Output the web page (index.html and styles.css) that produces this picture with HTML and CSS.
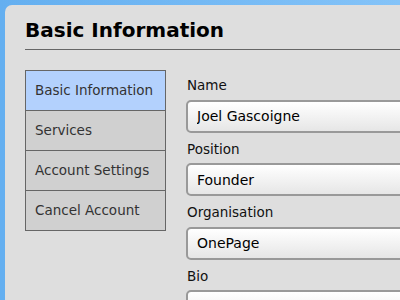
FILE: index.html
```html
<!DOCTYPE html>
<html lang="en">
  <head>
    <meta charset="UTF-8" />
    <meta name="viewport" content="width=device-width, initial-scale=1.0" />
    <title>Basic Information</title>
    <link rel="stylesheet" href="styles.css">
  </head>
  <body>
    <div class="window">
      <h1>Basic Information</h1>
      <div class="content">
        <ul class="tabs">
          <li class="tab active">Basic Information</li>
          <li class="tab">Services</li>
          <li class="tab">Account Settings</li>
          <li class="tab">Cancel Account</li>
        </ul>
        <form class="fields">
          <label for="name">Name</label>
          <input type="text" id="name" value="Joel Gascoigne" />
          <label for="position">Position</label>
          <input type="text" id="position" value="Founder" />
          <label for="org">Organisation</label>
          <input type="text" id="org" value="OnePage" />
          <label for="bio">Bio</label>
          <input type="text" id="bio" value="I run OnePage. Play guitar." />
        </form>
      </div>
    </div>
  </body>
</html>
```

FILE: styles.css
```css
body {
  margin: 0;
  height: 300px;
  overflow: hidden;
  background: linear-gradient(to right, #64aff0, #84c3f8);
  font-family: "DejaVu Sans", sans-serif;
}

.window {
  margin: 5px 0 0 5px;
  height: 295px;
  padding: 12px 0 0 20px;
  box-sizing: border-box;
  background: #dedede;
  border-top-left-radius: 7px;
  overflow: hidden;
}

h1 {
  margin: 0;
  height: 33px;
  padding-top: 1px;
  font-size: 20px;
  line-height: 24px;
  font-weight: bold;
  color: #000;
  border-bottom: 1px solid #666;
  box-sizing: border-box;
}

.content {
  display: flex;
  gap: 20px;
  padding-top: 20px;
}

.tabs {
  list-style: none;
  margin: 0;
  padding: 0;
  width: 139px;
  flex-shrink: 0;
  align-self: flex-start;
  border: 1px solid #666;
}

.tab {
  height: 39px;
  line-height: 39px;
  padding-left: 9px;
  font-size: 13.5px;
  color: #333;
  background: #d0d0d0;
  border-bottom: 1px solid #666;
}

.tab:last-child {
  border-bottom: none;
}

.tab.active {
  background: #b3d1fd;
}

.fields {
  flex: 1;
  display: flex;
  flex-direction: column;
  margin-right: -20px;
}

.fields label {
  font-size: 13.5px;
  line-height: 16.5px;
  color: #111;
  padding: 8px 0 6px 1px;
}

.fields label:first-child {
  padding-top: 7px;
}

.fields input {
  height: 33px;
  box-sizing: border-box;
  margin: 0;
  padding: 0 9px;
  font-family: "DejaVu Sans", sans-serif;
  font-size: 14px;
  color: #000;
  border: 2px solid #999;
  border-radius: 5px;
  background: linear-gradient(#ffffff, #e6e6e6);
}
```
